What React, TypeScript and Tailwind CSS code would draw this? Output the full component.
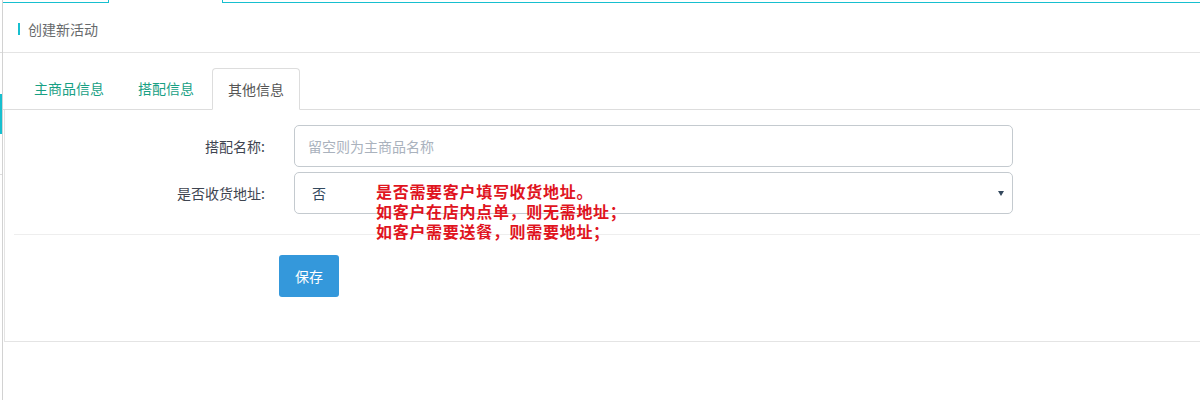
import React from "react";

const font = { fontFamily: '"Noto Sans CJK SC", "Noto Sans", sans-serif' };

export default function App() {
  return (
    <div
      className="w-[1200px] h-[400px] bg-white flex overflow-hidden"
      style={font}
    >
      {/* clipped sidebar strip */}
      <div className="w-[2px] h-full flex flex-col shrink-0">
        <div className="h-[52px]" />
        <div className="h-px bg-[#dcdcdc]" />
        <div className="h-[41px]" />
        <div className="h-[40px] bg-[#17bfcf]" />
        <div className="h-[40px]" />
        <div className="h-px bg-[#dcdcdc]" />
      </div>
      <div className="w-px h-full bg-[#d2d2d2] shrink-0" />

      {/* main */}
      <div className="flex-1 flex flex-col min-w-0">
        {/* top tab remnants */}
        <div className="h-[3px] flex">
          <div className="w-[106px] border-b border-r border-[#17bfcf]" />
          <div className="w-[113px]" />
          <div className="flex-1 border-b border-l border-[#17bfcf]" />
        </div>

        {/* header */}
        <div className="h-[50px] border-b border-[#e4e4e4] flex items-center pt-[3px] pl-[15px]">
          <div className="w-[2px] h-[12px] bg-[#17bfcf]" />
          <span className="ml-[8px] text-[14px] leading-[20px] text-[#676a6c]">
            创建新活动
          </span>
        </div>

        {/* tabs */}
        <div className="flex items-end pt-[14px] pl-[15px] border-b border-[#dddddd]">
          <div className="px-[15px] py-[10px] border border-transparent mr-[2px] text-[14px] leading-[20px] text-[#18a084]">
            主商品信息
          </div>
          <div className="px-[15px] py-[10px] border border-transparent mr-[2px] text-[14px] leading-[20px] text-[#18a084]">
            搭配信息
          </div>
          <div className="px-[15px] py-[10px] border border-[#dddddd] border-b-white bg-white rounded-t-[4px] -mb-px text-[14px] leading-[20px] text-[#555555]">
            其他信息
          </div>
        </div>

        {/* panel */}
        <div className="ml-px border-l border-b border-[#e4e4e4] pt-[15px] pb-[44px]">
          <div className="flex flex-col gap-[5px]">
            <div className="flex items-center">
              <div className="w-[260px] text-right text-[14px] leading-[20px] text-[#3e4450]">
                搭配名称:
              </div>
              <div className="ml-[29px] w-[719px] h-[42px] border border-[#c4cacf] rounded-[5px] flex items-center px-[13px] text-[14px] text-[#aab2bd]">
                留空则为主商品名称
              </div>
            </div>
            <div className="flex items-center">
              <div className="w-[260px] text-right text-[14px] leading-[20px] text-[#3e4450]">
                是否收货地址:
              </div>
              <div className="relative ml-[29px] w-[719px] h-[42px] border border-[#c4cacf] rounded-[5px] flex items-center pl-[17px] pr-[8px] text-[14px] text-[#34495e]">
                <span className="flex-1">否</span>
                <svg width="6" height="5" viewBox="0 0 6 5" className="mt-px">
                  <polygon points="0,0 6,0 3,5" fill="#34495e" />
                </svg>
                <div className="absolute left-[81px] top-[8px] text-[16px] leading-[20px] tracking-[0.7px] font-bold text-[#e0141e] whitespace-nowrap">
                  <div>是否需要客户填写收货地址。</div>
                  <div>如客户在店内点单，则无需地址；</div>
                  <div>如客户需要送餐，则需要地址；</div>
                </div>
              </div>
            </div>
          </div>

          <div className="mt-[20px] ml-[9px] h-px bg-[#eeeeee]" />

          <div className="mt-[20px] ml-[274px]">
            <button className="w-[60px] h-[42px] rounded-[3px] bg-[#3498db] text-white text-[14px] flex items-center justify-center">
              保存
            </button>
          </div>
        </div>
      </div>
    </div>
  );
}
